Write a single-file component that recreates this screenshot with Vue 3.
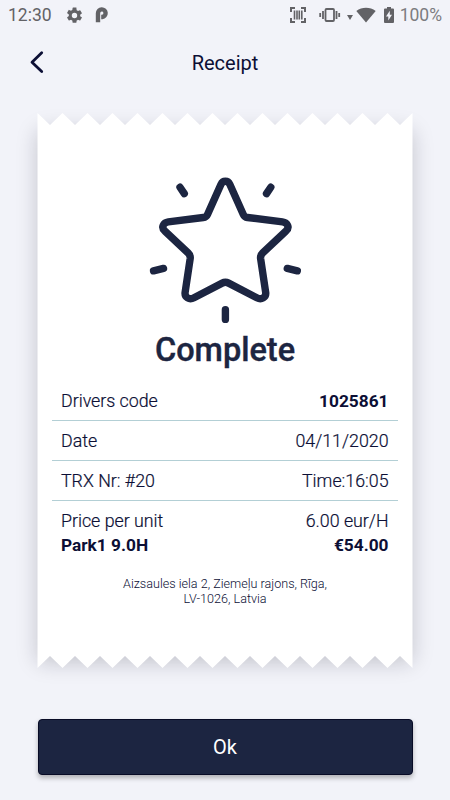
<script setup>
import { computed } from "vue";

const rows = [
  { label: "Drivers code", value: "1025861", strong: true },
  { label: "Date", value: "04/11/2020" },
  { label: "TRX Nr: #20", value: "Time:16:05" },
];

// Torn paper outline: 15 teeth, 25px each, along both edges
const TEETH = 15;
const WIDTH = 375;
const HEIGHT = 555;
const DEPTH = 12;

const paperPoints = computed(() => {
  const step = WIDTH / TEETH / 2;
  const top = [];
  const bottom = [];
  for (let i = 0; i <= TEETH * 2; i++) {
    const notch = i % 2 === 1;
    const x = i * step + 0.5;
    top.push(`${x},${notch ? DEPTH : 0}`);
    bottom.unshift(`${x},${notch ? HEIGHT - DEPTH : HEIGHT}`);
  }
  return [...top, ...bottom].join(" ");
});
</script>

<template>
  <div class="screen">
    <div class="status-bar">
      <span class="clock">12:30</span>
      <svg class="gear" width="19" height="19" viewBox="0 0 24 24">
        <path
          d="M19.14 12.94c.04-.3.06-.61.06-.94s-.02-.64-.07-.94l2.03-1.58a.49.49 0 0 0 .12-.61l-1.92-3.32a.49.49 0 0 0-.59-.22l-2.39.96a7 7 0 0 0-1.62-.94l-.36-2.54A.48.48 0 0 0 13.92 2h-3.84a.48.48 0 0 0-.48.41l-.36 2.54a7 7 0 0 0-1.62.94l-2.39-.96a.48.48 0 0 0-.59.22L2.72 8.47a.48.48 0 0 0 .12.61l2.03 1.58a6 6 0 0 0 0 1.88l-2.03 1.58a.49.49 0 0 0-.12.61l1.92 3.32c.12.22.37.29.59.22l2.39-.96c.5.38 1.03.7 1.62.94l.36 2.54c.05.24.24.41.48.41h3.84c.24 0 .44-.17.47-.41l.36-2.54a7 7 0 0 0 1.62-.94l2.39.96c.22.08.47 0 .59-.22l1.92-3.32a.48.48 0 0 0-.12-.61zM12 15.4a3.4 3.4 0 1 1 0-6.8 3.4 3.4 0 0 1 0 6.8z"
        />
      </svg>
      <svg class="parking" width="14" height="16" viewBox="0 0 14 16">
        <path d="M3 15.300V6.200A3.800 3.800 0 1 1 7.200 10H6.200" />
      </svg>
      <span class="spacer" />
      <svg class="scan" width="18" height="18" viewBox="0 0 18 18">
        <path d="M2 6V2h4M12 2h4v4M16 12v4h-4M6 16H2v-4" />
        <path d="M5.500 4.500v9M8 4.500v9M10.300 4.500v9M12.800 4.500v9" />
      </svg>
      <svg class="vibrate" width="22" height="16" viewBox="0 0 22 16">
        <rect x="6.500" y="2" width="8.500" height="12" rx="1" />
        <path d="M4 4v8M1.200 6v4M17.500 4v8M20.200 6v4" />
      </svg>
      <span class="caret" />
      <svg class="wifi" width="20" height="16" viewBox="0 0 20 16">
        <path d="M.3 3.900C6 -.3 14 -.3 19.700 3.900L10 15.500z" />
      </svg>
      <svg class="battery" width="10" height="16" viewBox="0 0 10 16">
        <path
          fill-rule="evenodd"
          d="M3 0h4v1.600h2q1 0 1 1V15q0 1-1 1H1q-1 0-1-1V2.600q0-1 1-1h2zM5.800 3.800L2 9.500h2.300v4L8 7.800H5.800z"
        />
      </svg>
      <span class="percent">100%</span>
    </div>

    <header class="header">
      <svg class="back" width="16" height="24" viewBox="0 0 16 24">
        <path d="M12.700 2.800L3 12.200l9.700 9.300" />
      </svg>
      <h1 class="title">Receipt</h1>
    </header>

    <main class="receipt">
      <svg class="paper" :width="WIDTH + 1" :height="HEIGHT">
        <polygon :points="paperPoints" />
      </svg>
      <div class="content">
        <svg class="star" width="152" height="150" viewBox="149.4 175 152 150">
          <path
            d="M220.900 184.500Q222.400 181.200 225.400 181.200T229.900 184.500L243.300 214.400Q244.500 217.100 247.500 217.500L282.500 221.800C287.500 222.400 290 227.500 286 231L262.600 253Q260.200 255.300 260.600 258.500L265.700 292.500C266.300 297.500 261.500 300.200 256.800 297.800L228.600 283.100Q225.400 281.500 222.200 283.100L194 297.800C189.300 300.200 184.500 297.500 185.100 292.500L190.200 258.500Q190.600 255.300 188.200 253L164.800 231C160.800 227.500 163.300 222.400 168.300 221.800L203.300 217.500Q206.300 217.100 207.500 214.400Z"
          />
          <path
            d="M180 187.200l4.300 6.400M270.800 187.200l-4.300 6.400M153.500 270.800l10-2.400M297.300 270.800l-10-2.400M225.400 309.800v9.600"
          />
        </svg>
        <h2 class="result">Complete</h2>
        <div v-for="row in rows" :key="row.label" class="row">
          <span>{{ row.label }}</span>
          <span :class="{ strong: row.strong }">{{ row.value }}</span>
        </div>
        <div class="totals">
          <div class="line">
            <span>Price per unit</span>
            <span>6.00 eur/H</span>
          </div>
          <div class="line strong">
            <span>Park1 9.0H</span>
            <span>€54.00</span>
          </div>
        </div>
        <p class="address">Aizsaules iela 2, Ziemeļu rajons, Rīga,<br />LV-1026, Latvia</p>
      </div>
    </main>

    <button class="ok" type="button">Ok</button>
  </div>
</template>

<style>
body {
  background: #f2f3f9;
}
</style>

<style scoped>
.screen {
  display: flex;
  flex-direction: column;
  width: 450px;
  height: 800px;
  overflow: hidden;
  background: #f2f3f9;
  color: #0c0f35;
  font-family: Roboto, "Liberation Sans", sans-serif;
}

.status-bar {
  display: flex;
  align-items: center;
  box-sizing: border-box;
  height: 30px;
  padding: 0 8px;
  color: #626266;
  font-size: 17.5px;
  fill: currentColor;
}

.clock {
  width: 44px;
  white-space: nowrap;
}

.gear {
  margin-left: 13px;
}

.parking {
  margin-left: 11px;
}

.parking path {
  fill: none;
  stroke: currentColor;
  stroke-width: 4.4;
}

.spacer {
  flex: 1;
}

.scan path {
  fill: none;
  stroke: currentColor;
  stroke-width: 1.6;
}

.scan path:first-child {
  stroke-width: 2;
}

.vibrate {
  margin-left: 12px;
}

.vibrate rect,
.vibrate path {
  fill: none;
  stroke: currentColor;
  stroke-width: 1.8;
}

.caret {
  margin: 4px 3px 0 6px;
  border: 3px solid transparent;
  border-top: 5px solid currentColor;
  border-bottom: 0;
}

.battery {
  margin: 0 6px 0 8px;
}

.percent {
  color: #7c7c80;
}

.header {
  display: grid;
  grid-template-columns: 60px 1fr 60px;
  align-items: center;
  height: 66px;
}

.back {
  margin: -2px 0 0 29px;
  fill: none;
  stroke: #0c0f35;
  stroke-width: 2.8;
  stroke-linecap: round;
  stroke-linejoin: round;
}

.title {
  margin: 0;
  font-size: 20px;
  font-weight: 400;
  text-align: center;
}

.receipt {
  position: relative;
  width: 376px;
  height: 555px;
  margin: 17px auto 0;
}

.receipt::before {
  content: "";
  position: absolute;
  inset: 12px 1px;
  box-shadow: 0 6px 20px rgba(20, 20, 35, 0.22);
}

.paper {
  position: absolute;
  inset: 0;
  fill: #fff;
}

.content {
  position: relative;
  display: flex;
  flex-direction: column;
  padding: 62px 15px 0;
}

.star {
  align-self: center;
  transform: translateX(0.4px);
  fill: none;
  stroke: #1c2541;
  stroke-width: 7.4;
  stroke-linecap: round;
  stroke-linejoin: round;
}

.result {
  margin: 5px 0 11px;
  color: #1c2541;
  font-size: 32.5px;
  font-weight: 500;
  line-height: 40px;
  text-align: center;
  -webkit-text-stroke: 0.4px currentColor;
}

.row {
  display: flex;
  align-items: center;
  justify-content: space-between;
  box-sizing: border-box;
  height: 40px;
  padding: 0 9.5px 0 9px;
  border-bottom: 1px solid #b3cfd5;
  font-size: 17.8px;
  font-weight: 300;
  -webkit-text-stroke: 0.2px currentColor;
}

.totals {
  padding: 8px 9.5px 0 9px;
  font-size: 17.8px;
  font-weight: 300;
  line-height: 24px;
  -webkit-text-stroke: 0.2px currentColor;
}

.line {
  display: flex;
  justify-content: space-between;
}

.strong {
  font-size: 17.3px;
  font-weight: 700;
  -webkit-text-stroke: 0;
}

.address {
  margin: 19px 0 0;
  font-size: 12.6px;
  font-weight: 300;
  line-height: 15px;
  text-align: center;
}

.ok {
  width: 375px;
  height: 56px;
  margin: 51px auto 0;
  padding: 0;
  border: 1px solid #080b26;
  border-radius: 4px;
  background: #1c2541;
  box-shadow: 0 3px 5px rgba(0, 0, 0, 0.28);
  color: #fff;
  font: 400 20px Roboto, "Liberation Sans", sans-serif;
}
</style>
